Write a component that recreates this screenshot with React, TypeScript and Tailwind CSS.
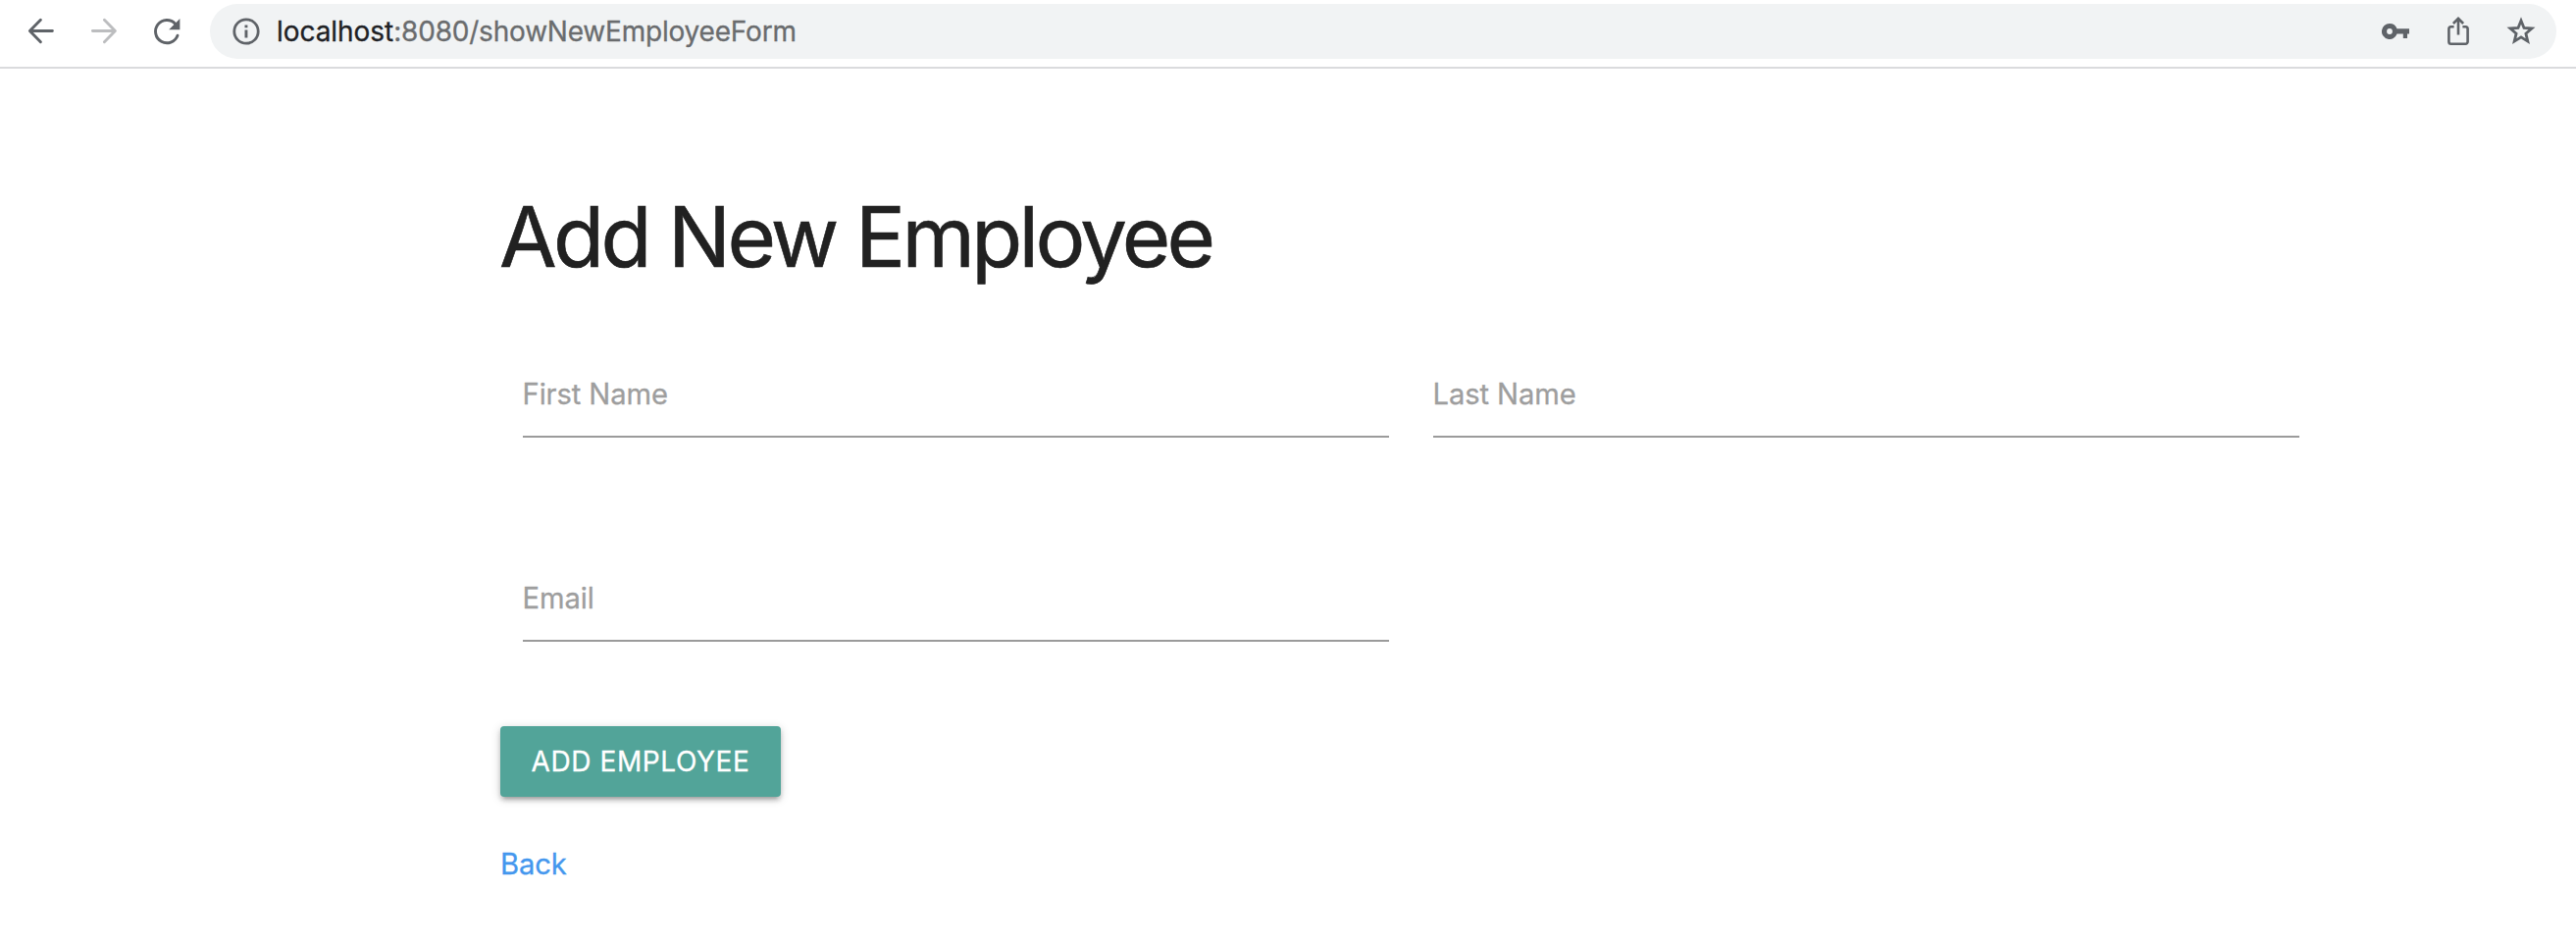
import React from "react";

function Field({ label }: { label: string }) {
  return (
    <div className="flex h-[90px] w-[883px] items-start border-b-2 border-[#9b9b9b]">
      <label className="pt-[28px] text-[29.2px] leading-[36px] tracking-[-0.1px] text-[#9e9e9e] [-webkit-text-stroke:0.3px]">{label}</label>
    </div>
  );
}

function BackIcon() {
  return (
    <svg width="32" height="32" viewBox="0 0 32 32" fill="none" stroke="currentColor" strokeWidth="2.9" strokeLinecap="round" strokeLinejoin="round">
      <path d="M28.4 15.5H6M16.4 4.3 5.4 15.5l11 11.2" />
    </svg>
  );
}

function ForwardIcon() {
  return (
    <svg width="32" height="32" viewBox="0 0 32 32" fill="none" stroke="currentColor" strokeWidth="2.9" strokeLinecap="round" strokeLinejoin="round">
      <path d="M5.4 15.5H28M17.4 4.3l11 11.2-11 11.2" />
    </svg>
  );
}

function ReloadIcon() {
  return (
    <svg width="32" height="32" viewBox="0 0 32 32" fill="none">
      <path d="M28 20.2A11.6 11.6 0 1 1 25.6 8.2" stroke="currentColor" strokeWidth="2.9" strokeLinecap="round" />
      <path d="M30.4 3V14.2H19.2z" fill="currentColor" />
    </svg>
  );
}

function InfoIcon() {
  return (
    <svg width="30" height="30" viewBox="0 0 30 30" fill="none">
      <circle cx="15" cy="15" r="12.2" stroke="currentColor" strokeWidth="2.8" />
      <path d="M13.5 8.4h2.9v2.9h-2.9zM13.5 13.4h2.9v8h-2.9z" fill="currentColor" />
    </svg>
  );
}

function KeyIcon() {
  return (
    <svg width="28" height="16" viewBox="0 0 28 16">
      <path fill="currentColor" fillRule="evenodd" d="M8 0a8 8 0 0 1 7.5 5.3H28v5.3h-2V15h-4.2v-4.4h-6.3A8 8 0 1 1 8 0Zm0 5.1a2.9 2.9 0 1 0 0 5.8 2.9 2.9 0 0 0 0-5.8Z" />
    </svg>
  );
}

function ShareIcon() {
  return (
    <svg width="24" height="32" viewBox="0 0 24 32" fill="none" stroke="currentColor" strokeWidth="2.6">
      <path d="M7.6 11.2H4.6a2.2 2.2 0 0 0-2.2 2.2v13.2a2.2 2.2 0 0 0 2.2 2.2h14.8a2.2 2.2 0 0 0 2.2-2.2V13.4a2.2 2.2 0 0 0-2.2-2.2h-3" />
      <path d="M12 19.6V3.4M6.9 8 12 2.9 17.1 8" />
    </svg>
  );
}

function StarIcon() {
  return (
    <svg width="30" height="30" viewBox="0 0 30 30" fill="none" stroke="currentColor" strokeWidth="2.8">
      <path d="m15 3.9 3 7.5 8 .6-6.1 5.2 1.9 7.9L15 20.9l-6.8 4.2 1.9-7.9L4 12l8-.6z" />
    </svg>
  );
}

export default function App() {
  return (
    <div className="h-[962px] bg-white font-['Inter',sans-serif]">
      <header className="flex h-[70px] items-start border-b-2 border-[#dadbdd] pt-1 text-[#5f6368]">
        <div className="flex h-14 w-[214px] items-center gap-8 pl-[25px]">
          <BackIcon />
          <span className="text-[#bcbdbf]"><ForwardIcon /></span>
          <ReloadIcon />
        </div>
        <div className="flex h-14 w-[2392px] items-center rounded-full bg-[#f1f3f4] pr-[21px] pl-[21.5px]">
          <InfoIcon />
          <p className="grow pl-[16.5px] text-[28px] leading-[56px] tracking-[-0.2px] text-[#6a6c6e] [-webkit-text-stroke:0.3px]">
            <span className="tracking-[-0.05px] text-[#202124]">localhost</span>:8080/showNewEmployeeForm
          </p>
          <div className="flex items-center pb-px">
            <KeyIcon />
            <span className="ml-[38px]"><ShareIcon /></span>
            <span className="ml-[37px]"><StarIcon /></span>
          </div>
        </div>
      </header>
      <main className="pt-[117px] pl-[510px]">
        <h1 className="-ml-px text-[85px] leading-[110px] tracking-[-3.65px] text-[#212121] [-webkit-text-stroke:0.6px]">Add New Employee</h1>
        <form>
          <div className="flex gap-[45px] pt-[59px] pl-[22.5px]">
            <Field label="First Name" />
            <Field label="Last Name" />
          </div>
          <div className="mt-[118px] pl-[22.5px]">
            <Field label="Email" />
          </div>
          <button
            type="button"
            className="mt-[86px] block h-[72px] w-[286px] rounded-[4px] bg-[#52a499] text-[28px] leading-[72px] tracking-[0.6px] text-white shadow-[0_4px_4px_0_rgba(0,0,0,0.14),0_6px_2px_-4px_rgba(0,0,0,0.12),0_2px_10px_0_rgba(0,0,0,0.2)] [-webkit-text-stroke:0.3px]"
          >
            ADD EMPLOYEE
          </button>
        </form>
        <a className="mt-[51px] block text-[29.2px] leading-[36px] tracking-[-0.1px] text-[#4497ee] [-webkit-text-stroke:0.3px]">Back</a>
      </main>
    </div>
  );
}
